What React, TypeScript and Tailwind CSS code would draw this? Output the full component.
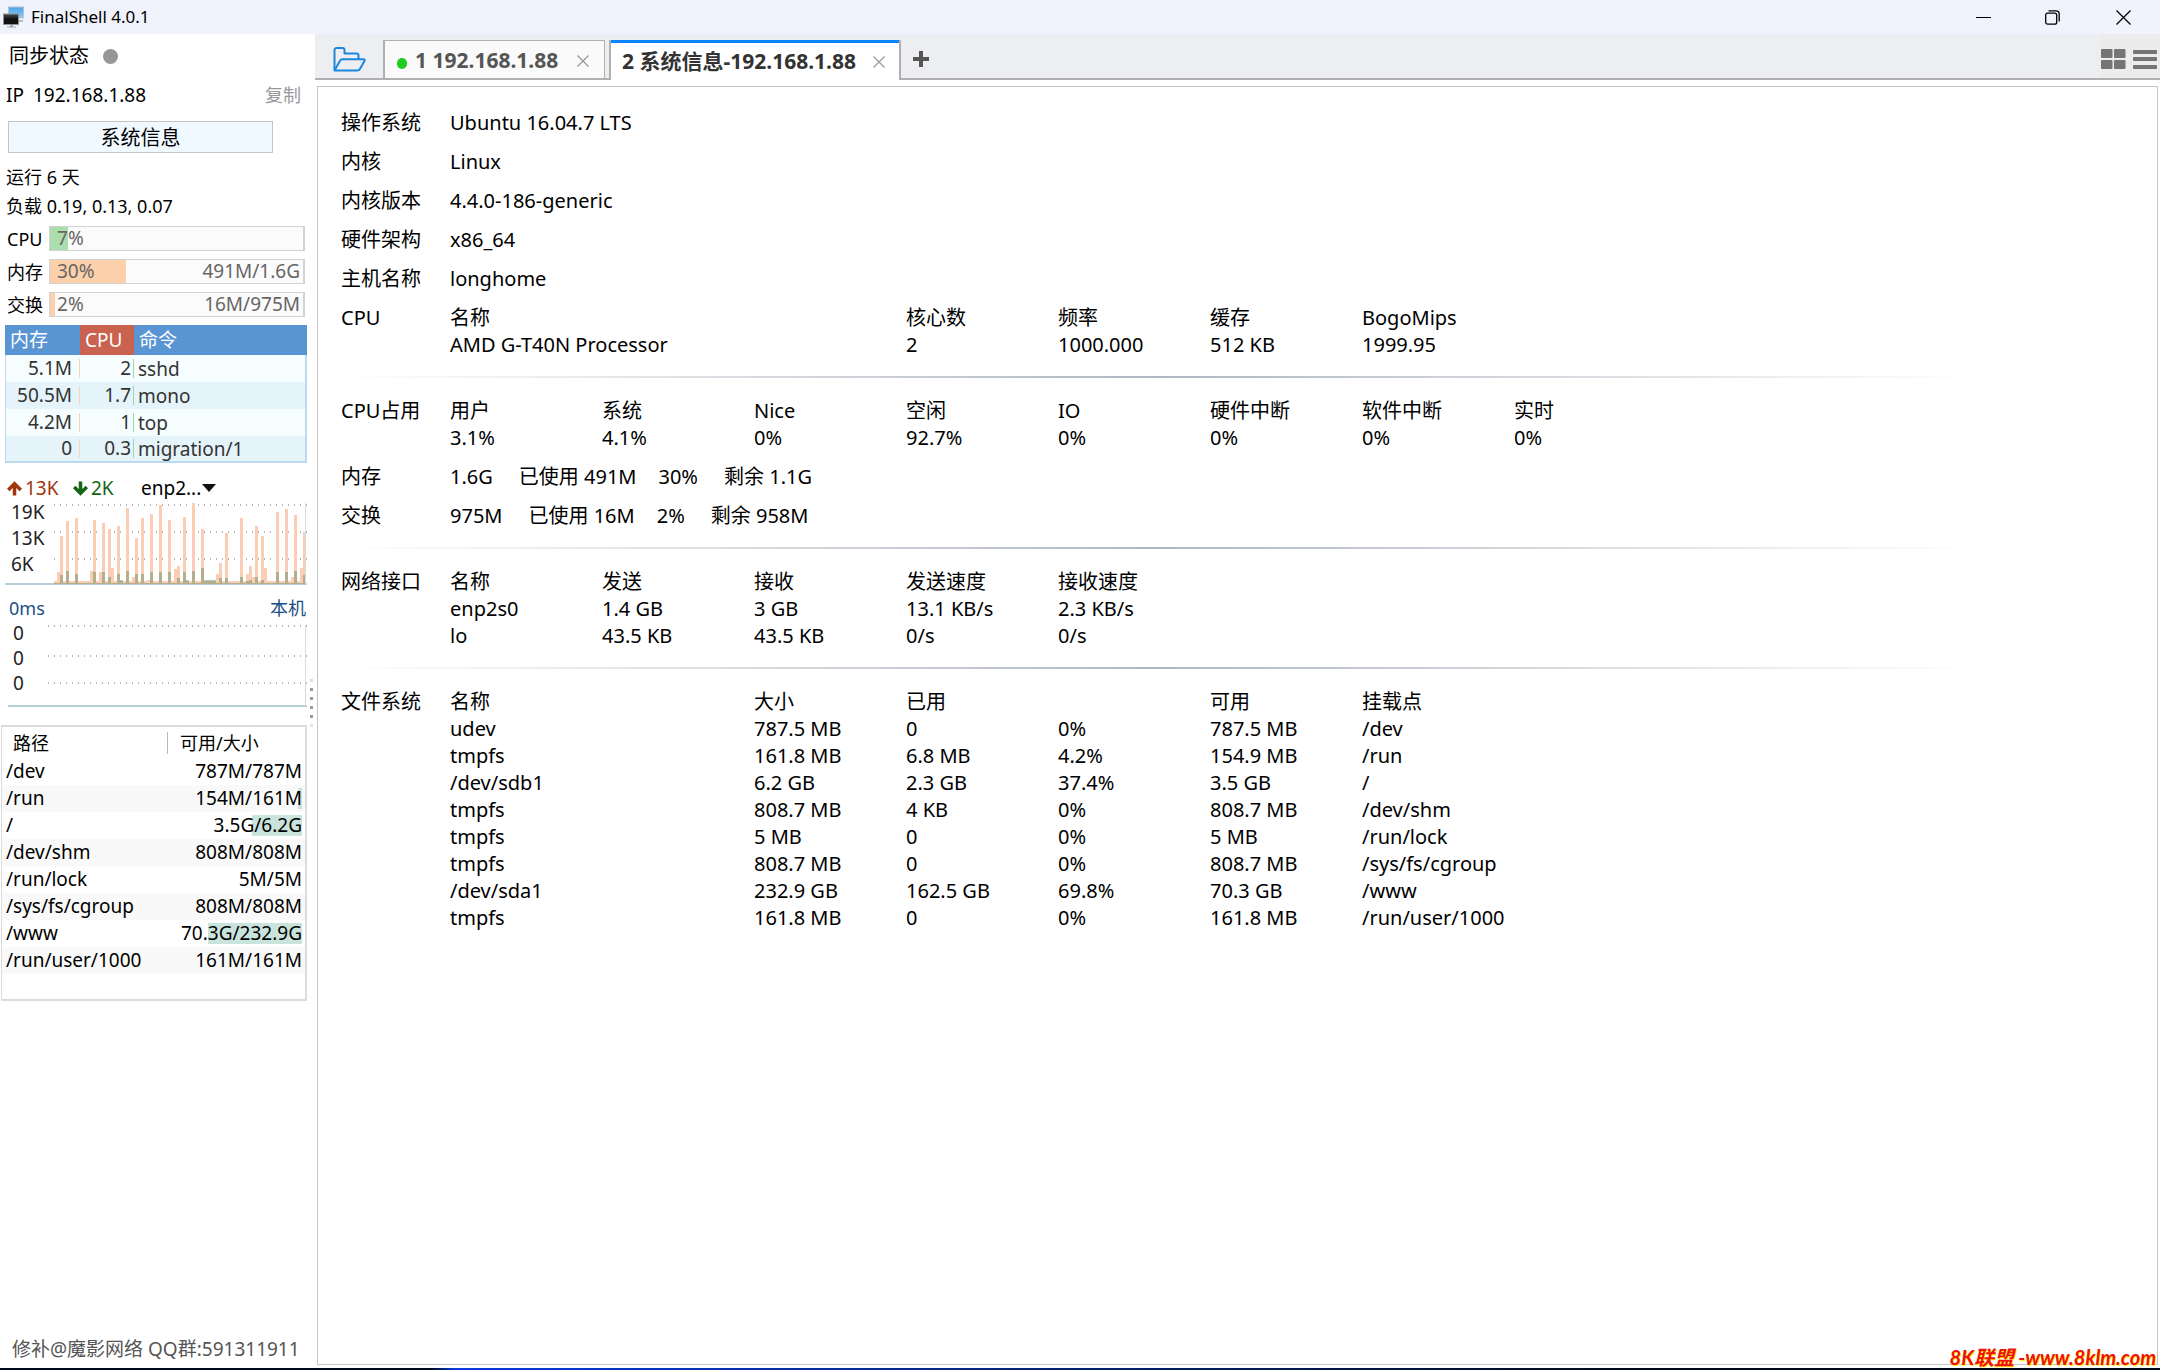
import { Fragment } from "react";
import type { ReactNode } from "react";

const SENT: Record<number, number> = {
  1: 12, 2: 48, 4: 63, 7: 66, 12: 13, 13: 64, 15: 12, 16: 61, 18: 55, 19: 16, 21: 58, 24: 76, 26: 7, 27: 46, 29: 66,
  31: 4, 32: 70, 35: 79, 38: 64, 40: 15, 41: 18, 43: 67, 46: 81, 49: 55, 54: 10, 55: 21, 57: 51, 62: 66, 64: 10,
  65: 18, 66: 7, 67: 58, 69: 48, 70: 16, 74: 72, 77: 75, 79: 7, 80: 69, 82: 16, 83: 52,
};

const RECEIVED: Record<number, number> = {
  2: 9, 4: 13, 7: 10, 13: 12, 16: 12, 18: 7, 21: 10, 22: 4, 24: 13, 27: 10, 29: 10, 32: 12, 35: 12, 38: 12, 41: 6,
  43: 12, 44: 4, 46: 13, 49: 16, 50: 4, 51: 4, 52: 4, 53: 4, 55: 6, 57: 6, 62: 7, 64: 3, 65: 4, 67: 7, 69: 4, 74: 12,
  77: 12, 80: 13, 83: 9,
};

const METERS = [
  { label: "CPU", percent: 7, detail: "", fill: "bg-[#acddac]" },
  { label: "内存", percent: 30, detail: "491M/1.6G", fill: "bg-[#fcd0ab]" },
  { label: "交换", percent: 2, detail: "16M/975M", fill: "bg-[#fcd0ab]" },
];

const PROCESSES = [
  ["5.1M", "2", "sshd"],
  ["50.5M", "1.7", "mono"],
  ["4.2M", "1", "top"],
  ["0", "0.3", "migration/1"],
];

const MOUNTS = [
  { path: "/dev", size: "787M/787M", used: 0 },
  { path: "/run", size: "154M/161M", used: 3 },
  { path: "/", size: "3.5G/6.2G", used: 37 },
  { path: "/dev/shm", size: "808M/808M", used: 0 },
  { path: "/run/lock", size: "5M/5M", used: 0 },
  { path: "/sys/fs/cgroup", size: "808M/808M", used: 0 },
  { path: "/www", size: "70.3G/232.9G", used: 70 },
  { path: "/run/user/1000", size: "161M/161M", used: 0 },
];

const SYSTEM = [
  ["操作系统", "Ubuntu 16.04.7 LTS"],
  ["内核", "Linux"],
  ["内核版本", "4.4.0-186-generic"],
  ["硬件架构", "x86_64"],
  ["主机名称", "longhome"],
];

const FILESYSTEMS = [
  ["udev", "787.5 MB", "0", "0%", "787.5 MB", "/dev"],
  ["tmpfs", "161.8 MB", "6.8 MB", "4.2%", "154.9 MB", "/run"],
  ["/dev/sdb1", "6.2 GB", "2.3 GB", "37.4%", "3.5 GB", "/"],
  ["tmpfs", "808.7 MB", "4 KB", "0%", "808.7 MB", "/dev/shm"],
  ["tmpfs", "5 MB", "0", "0%", "5 MB", "/run/lock"],
  ["tmpfs", "808.7 MB", "0", "0%", "808.7 MB", "/sys/fs/cgroup"],
  ["/dev/sda1", "232.9 GB", "162.5 GB", "69.8%", "70.3 GB", "/www"],
  ["tmpfs", "161.8 MB", "0", "0%", "161.8 MB", "/run/user/1000"],
];

function TitleBar() {
  return (
    <header className="flex h-[34px] items-center bg-[#f0f3fb] pl-[3px]">
      <svg width="22" height="22" viewBox="0 0 22 22">
        <defs>
          <linearGradient id="screen" x1="0" y1="0" x2="0" y2="1">
            <stop offset="0" stopColor="#4aa3ea" />
            <stop offset="1" stopColor="#8ccaf8" />
          </linearGradient>
          <linearGradient id="front" x1="0" y1="0" x2="0" y2="1">
            <stop offset="0" stopColor="#4a4a4a" />
            <stop offset="0.5" stopColor="#111" />
          </linearGradient>
        </defs>
        <rect x="5.5" y="1" width="15" height="11" fill="url(#screen)" stroke="#b9c4cf" />
        <path d="M14 14h6v2h-6z" fill="#b5bcc4" />
        <rect x="0.5" y="8" width="15" height="10.500" fill="url(#front)" stroke="#8e9399" />
        <path d="M7 19h3v1.500h3v1H4v-1h3z" fill="#a5a9ad" />
      </svg>
      <h1 className="ml-[6px] flex-1 text-[17px] text-black">FinalShell 4.0.1</h1>
      <button aria-label="最小化" className="flex h-full w-[69px] items-center justify-center">
        <svg width="15" height="15" viewBox="0 0 15 15">
          <path d="M0 7.500h15" stroke="#000" />
        </svg>
      </button>
      <button aria-label="还原" className="flex h-full w-[69px] items-center justify-center">
        <svg width="15" height="15" viewBox="0 0 15 15" fill="none" stroke="#000" strokeWidth="1.300">
          <rect x="0.700" y="3.200" width="11" height="11" rx="2" />
          <path d="M3.500 0.800H11a3.200 3.200 0 0 1 3.200 3.200v7.500" />
        </svg>
      </button>
      <button aria-label="关闭" className="flex h-full w-[73px] items-center justify-center">
        <svg width="15" height="15" viewBox="0 0 15 15" stroke="#000" strokeWidth="1.300">
          <path d="M0.500 0.500l14 14M14.500 0.500l-14 14" />
        </svg>
      </button>
    </header>
  );
}

function Meter({ label, percent, detail, fill }: (typeof METERS)[number]) {
  return (
    <div className="flex h-[25px] items-center">
      <span className="w-[42px] text-lg">{label}</span>
      <div
        role="meter"
        aria-label={label}
        aria-valuenow={percent}
        className="relative h-full flex-1 border border-r-2 border-[#d2d2d2] bg-[#fbfbfb]"
      >
        <div className={`absolute inset-y-0 left-0 ${fill}`} style={{ width: `${percent}%` }} />
        <div className="relative flex h-full items-center justify-between pr-[3px] pl-[7px] text-[19px] text-[#666]">
          <span>{percent}%</span>
          <span>{detail}</span>
        </div>
      </div>
    </div>
  );
}

function ProcessTable() {
  return (
    <table className="mt-2 w-[302px] table-fixed border-separate border-spacing-0 text-[19px] text-[#333]">
      <colgroup>
        <col className="w-[75px]" />
        <col className="w-[54px]" />
        <col />
      </colgroup>
      <thead>
        <tr className="h-[30px] bg-[#5a95d3] text-left text-white">
          <th className="p-0 pl-[5px] font-normal">内存</th>
          <th className="bg-[#c9624f] p-0 pl-[5px] font-normal">CPU</th>
          <th className="p-0 pl-[5px] font-normal">命令</th>
        </tr>
      </thead>
      <tbody className="[&>tr:last-child>td]:border-b-2">
        {PROCESSES.map(([mem, cpu, name]) => (
          <tr key={name} className="h-[27px] bg-[#f5fdff] even:bg-[#e5f4fa]">
            <td className="border-l border-[#bcd9f0] p-0 text-right leading-[22px]">
              <div className="h-[19px] border-r border-[#f9d3b8] pr-[7px] leading-[19px]">{mem}</div>
            </td>
            <td className="border-[#bcd9f0] p-0 text-right leading-[22px]">
              <div className="h-[19px] border-r border-[#9fd7a8] pr-[2px] leading-[19px]">{cpu}</div>
            </td>
            <td className="border-r-2 border-[#bcd9f0] p-0 pl-[4px] leading-[22px]">{name}</td>
          </tr>
        ))}
      </tbody>
    </table>
  );
}

function DottedLines({ rows, start }: { rows: number[]; start: number }) {
  return (
    <>
      {rows.map((y) => (
        <path key={y} d={`M${start} ${y}H261`} stroke="#b4b4b4" strokeWidth="2" strokeDasharray="1 5" />
      ))}
    </>
  );
}

function TrafficChart() {
  return (
    <div className="flex h-[86px] w-[302px] border-b-2 border-[#b5ced6]">
      <div className="w-[43px] pl-[6px] text-[19px] leading-[26px] text-[#222]">
        <div>19K</div>
        <div>13K</div>
        <div>6K</div>
      </div>
      <svg width="259" height="85" viewBox="0 0 259 85" shapeRendering="crispEdges">
        <DottedLines rows={[6, 33, 60]} start={6} />
        {Array.from({ length: 84 }, (_, i) => {
          const up = SENT[i] ?? 3;
          const down = RECEIVED[i] ?? 1;
          return (
            <Fragment key={i}>
              <rect x={6 + i * 3} y={85 - up} width="3" height={up} fill="#fccdb5" />
              <rect x={6 + i * 3} y={85 - down} width="3" height={down} fill="#5a8c5a" fillOpacity="0.450" />
            </Fragment>
          );
        })}
        <path d="M257.500 4V85" stroke="#cfdfe2" />
      </svg>
    </div>
  );
}

function PingChart() {
  return (
    <div className="ml-[3px] flex h-[86px] w-[299px] border-b-2 border-[#b5ced6]">
      <div className="w-[38px] pl-[5px] text-[19px] leading-[25px] text-[#222]">
        <div>0</div>
        <div>0</div>
        <div>0</div>
      </div>
      <svg width="261" height="85" viewBox="0 0 261 85" shapeRendering="crispEdges">
        <DottedLines rows={[5, 35, 62]} start={2} />
        <path d="M259.500 4V85" stroke="#cfdfe2" />
      </svg>
    </div>
  );
}

function MountTable() {
  return (
    <div className="mt-[18px] mr-[3px] ml-px h-[276px] border-2 border-l border-[#dcdcdc]">
      <table className="w-full table-fixed border-collapse text-[19px] text-black">
        <colgroup>
          <col />
          <col className="w-[138px]" />
        </colgroup>
        <thead>
          <tr className="h-[31px] text-left text-lg">
            <th className="p-0 pl-[11px] font-normal">路径</th>
            <th className="p-0 font-normal">
              <div className="h-[22px] border-l border-[#b8b8b8] pl-[12px] leading-[22px]">可用/大小</div>
            </th>
          </tr>
        </thead>
        <tbody>
          {MOUNTS.map(({ path, size, used }) => (
            <tr key={path} className="h-[27px] leading-[27px] even:bg-[#f9f9f9]">
              <td className="p-0 pl-[4px]">{path}</td>
              <td className="p-0 pr-[3px]">
                <div className="relative text-right">
                  <div className="absolute top-[3px] right-0 h-[21px] bg-[#c9e4dc]" style={{ width: `${used}%` }} />
                  <span className="relative">{size}</span>
                </div>
              </td>
            </tr>
          ))}
        </tbody>
      </table>
    </div>
  );
}

function Arrow({ down, color }: { down?: boolean; color: string }) {
  return (
    <svg width="15" height="15" viewBox="0 0 15 15" fill="none" stroke={color} strokeWidth="3.500">
      {down ? <path d="M7.500 0.500v12M1.200 6l6.300 6.300L13.800 6" /> : <path d="M7.500 14.500v-12M1.200 9l6.300-6.300L13.800 9" />}
    </svg>
  );
}

function Sidebar() {
  return (
    <aside className="flex w-[315px] shrink-0 bg-white text-black">
      <div className="flex min-w-0 flex-1 flex-col">
        <div className="flex h-[44px] items-center pl-[9px] text-xl">
          同步状态
          <span className="ml-[14px] size-[15px] rounded-full bg-[#969696]" />
        </div>
        <div className="flex h-[34px] items-center pr-[9px] pl-[6px] text-[19px]">
          <span className="w-[27px]">IP</span>
          <span className="flex-1">192.168.1.88</span>
          <button className="text-lg text-[#999]">复制</button>
        </div>
        <button className="mt-[9px] ml-2 h-[32px] w-[265px] border border-[#c4c4c4] bg-[#f0f9ff] pt-[2px] text-xl">
          系统信息
        </button>
        <div className="mt-[10px] pl-[6px] text-lg leading-[29px]">
          <p>运行 6 天</p>
          <p>负载 0.19, 0.13, 0.07</p>
        </div>
        <div className="mt-[5px] flex flex-col gap-2 pr-[5px] pl-[7px]">
          {METERS.map((m) => (
            <Meter key={m.label} {...m} />
          ))}
        </div>
        <div className="pl-[5px]">
          <ProcessTable />
          <div className="mt-[14px] flex h-[22px] items-center pl-[2px] text-[19px]">
            <Arrow color="#a0360c" />
            <span className="ml-[3px] w-[48px] text-[#a0360c]">13K</span>
            <Arrow down color="#146414" />
            <span className="ml-[3px] w-[50px] text-[#146414]">2K</span>
            <select aria-label="网卡" className="w-[61px] appearance-none leading-[22px]">
              <option>enp2...</option>
            </select>
            <svg width="14" height="8" viewBox="0 0 14 8">
              <path d="M0 0h14L7 8z" fill="#111" />
            </svg>
          </div>
          <TrafficChart />
          <div className="mt-[10px] flex h-[26px] items-center justify-between pr-[4px] pl-[4px] text-lg text-[#1b4f85]">
            <span>0ms</span>
            <span>本机</span>
          </div>
          <PingChart />
        </div>
        <MountTable />
        <p className="mt-auto mb-[5px] pl-[12px] text-[19px] leading-[27px] whitespace-nowrap text-[#555]">
          修补@魔影网络 QQ群:591311911
        </p>
      </div>
      <div className="flex w-[5px] flex-col gap-[6px] pt-[645px]">
        {[0, 1, 2, 3, 4, 5].map((i) => (
          <i key={i} className="size-[3px] bg-[#999] first:bg-[#ddd] last:bg-[#e4e4e4]" />
        ))}
      </div>
    </aside>
  );
}

function CloseTab() {
  return (
    <button aria-label="关闭标签">
      <svg width="12" height="12" viewBox="0 0 12 12" stroke="#999" strokeWidth="1.300">
        <path d="M0.500 0.500l11 11M11.500 0.500l-11 11" />
      </svg>
    </button>
  );
}

function TabBar() {
  return (
    <nav className="flex h-[46px] bg-[#edeef2]">
      <div className="flex w-[68px] items-center border-b-2 border-[#b0b0b0] pt-[6px] pl-[18px]">
        <button aria-label="打开">
          <svg width="33" height="25" viewBox="0 0 33 25" fill="none" stroke="#1a86dc" strokeWidth="2" strokeLinejoin="round">
            <path d="M1.500 23V3a2 2 0 0 1 2-2h6a2 2 0 0 1 2 2v3.500h12a2 2 0 0 1 2 2V12" />
            <path d="M1.500 23.500L7 13.800a3 3 0 0 1 2.600-1.600H30.500a1.200 1.200 0 0 1 1 1.800l-4.600 8a3 3 0 0 1-2.600 1.600z" />
          </svg>
        </button>
      </div>
      <div className="mt-[6px] flex w-[222px] items-center border border-b-2 border-l-2 border-[#b0b0b0] bg-[#fafafa] pt-[3px] pl-[12px]">
        <span className="mt-1 h-[11px] w-[10px] rounded-full bg-[#1ecd1e]" />
        <button className="w-[170px] pl-[8px] text-left text-[21px] font-bold text-[#555]">
          1 192.168.1.88
        </button>
        <CloseTab />
      </div>
      <div className="w-[4px] border-b-2 border-[#b0b0b0]" />
      <div className="mt-[6px] flex w-[292px] items-center border-x-2 border-x-[#b0b0b0] bg-white">
        <div className="flex h-full w-full items-center border-t-3 border-[#0a84ff] pl-[11px]">
          <button className="w-[251px] text-left text-[21px] font-bold whitespace-nowrap text-[#333]">
            2 系统信息-192.168.1.88
          </button>
          <CloseTab />
        </div>
      </div>
      <div className="flex flex-1 items-center border-b-2 border-[#b0b0b0] pt-[6px] pl-[12px]">
        <button aria-label="新建标签">
          <svg width="16" height="16" viewBox="0 0 16 16" stroke="#555" strokeWidth="4">
            <path d="M8 0v16M0 8h16" />
          </svg>
        </button>
      </div>
      <div className="flex w-[59px] items-center gap-[7px] border-b-2 border-[#b0b0b0] bg-[#ececec] pt-[6px]">
        <button aria-label="网格">
          <svg width="25" height="20" viewBox="0 0 25 20" fill="#757575">
            <rect width="11.500" height="9" rx="1" />
            <rect x="13" width="11.500" height="9" rx="1" />
            <rect y="11" width="11.500" height="9" rx="1" />
            <rect x="13" y="11" width="11.500" height="9" rx="1" />
          </svg>
        </button>
        <button aria-label="菜单">
          <svg width="24" height="20" viewBox="0 0 24 20" fill="#757575">
            <rect y="1" width="24" height="4" rx="1" />
            <rect y="8" width="24" height="4" rx="1" />
            <rect y="16" width="24" height="4" rx="1" />
          </svg>
        </button>
      </div>
    </nav>
  );
}

function Row({ label, children }: { label: string; children: ReactNode }) {
  return (
    <section className="flex">
      <h2 className="w-[109px] shrink-0">{label}</h2>
      {children}
    </section>
  );
}

function DataTable({ head, rows, wide }: { head: string[]; rows: string[][]; wide?: boolean }) {
  return (
    <table className="table-fixed border-collapse text-left">
      <thead>
        <tr>
          {head.map((h, i) => (
            <th key={i} className={`h-[27px] p-0 font-normal ${wide && i === 0 ? "w-[456px]" : "w-[152px]"}`}>
              {h}
            </th>
          ))}
        </tr>
      </thead>
      <tbody>
        {rows.map((cells, i) => (
          <tr key={i}>
            {cells.map((cell, j) => (
              <td key={j} className="h-[27px] p-0">
                {cell}
              </td>
            ))}
          </tr>
        ))}
      </tbody>
    </table>
  );
}

function Separator() {
  return (
    <div className="mt-[6px] mb-[7px] h-[2px] w-[90%] bg-linear-to-r from-transparent via-[#b0b7c0] to-transparent" />
  );
}

function MemoryLine({ total, used, percent, free }: { total: string; used: string; percent: string; free: string }) {
  return (
    <p className="flex">
      <span className="mr-[26px]">{total}</span>
      <span className="mr-[22px]">已使用 {used}</span>
      <span className="mr-[26px]">{percent}</span>
      <span>剩余 {free}</span>
    </p>
  );
}

function SystemInfo() {
  return (
    <main className="mt-[6px] mr-[2px] mb-[3px] ml-[2px] flex flex-1 flex-col gap-3 border border-[#c4c4c4] bg-white pt-[22px] pl-[23px] text-xl leading-[27px] text-black">
      {SYSTEM.map(([label, value]) => (
        <Row key={label} label={label}>
          <p>{value}</p>
        </Row>
      ))}
      <Row label="CPU">
        <DataTable
          wide
          head={["名称", "核心数", "频率", "缓存", "BogoMips"]}
          rows={[["AMD G-T40N Processor", "2", "1000.000", "512 KB", "1999.95"]]}
        />
      </Row>
      <Separator />
      <Row label="CPU占用">
        <DataTable
          head={["用户", "系统", "Nice", "空闲", "IO", "硬件中断", "软件中断", "实时"]}
          rows={[["3.1%", "4.1%", "0%", "92.7%", "0%", "0%", "0%", "0%"]]}
        />
      </Row>
      <Row label="内存">
        <MemoryLine total="1.6G" used="491M" percent="30%" free="1.1G" />
      </Row>
      <Row label="交换">
        <MemoryLine total="975M" used="16M" percent="2%" free="958M" />
      </Row>
      <Separator />
      <Row label="网络接口">
        <DataTable
          head={["名称", "发送", "接收", "发送速度", "接收速度"]}
          rows={[
            ["enp2s0", "1.4 GB", "3 GB", "13.1 KB/s", "2.3 KB/s"],
            ["lo", "43.5 KB", "43.5 KB", "0/s", "0/s"],
          ]}
        />
      </Row>
      <Separator />
      <Row label="文件系统">
        <DataTable
          head={["名称", "", "大小", "已用", "", "可用", "挂载点"]}
          rows={FILESYSTEMS.map(([name, ...rest]) => [name, "", ...rest])}
        />
      </Row>
    </main>
  );
}

export default function App() {
  return (
    <div className="relative flex min-h-screen flex-col bg-white font-['Noto_Sans','Noto_Sans_CJK_SC',sans-serif]">
      <TitleBar />
      <div className="flex flex-1">
        <Sidebar />
        <div className="flex min-w-0 flex-1 flex-col">
          <TabBar />
          <SystemInfo />
        </div>
      </div>
      <div className="h-[2px] bg-linear-to-r from-[#020a20] from-20% via-[#0a3be0] via-21% to-[#020a1c] to-75%" />
      <a
        href="#home"
        className="absolute right-[4px] bottom-[3px] font-['Lato','Noto_Sans_CJK_SC',sans-serif] text-xl leading-[20px] font-bold text-[#f01010] italic [text-shadow:1px_1px_0_#ffee00]"
      >
        8K联盟 -www.8klm.com
      </a>
    </div>
  );
}
